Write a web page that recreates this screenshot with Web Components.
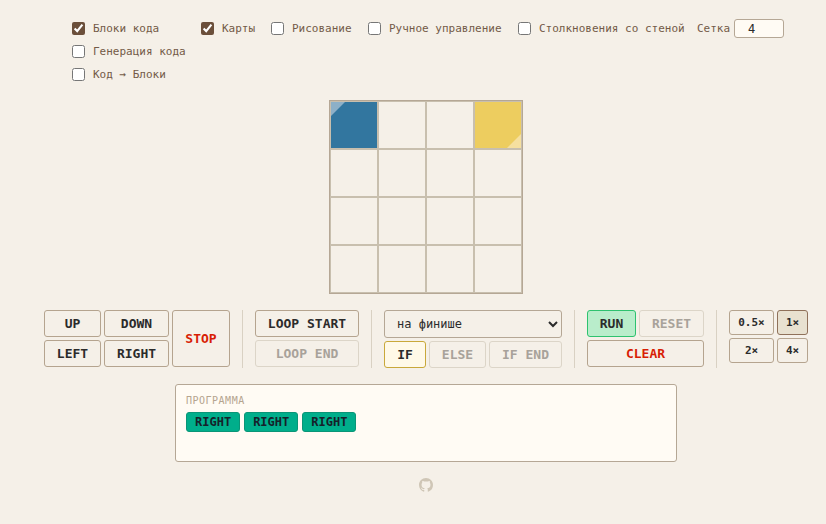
<!DOCTYPE html>
<html lang="ru">
<head>
<meta charset="utf-8">
<title>Лабиринт</title>
<style>
html, body { margin: 0; background: #f5f0e8; }
body { font-family: "DejaVu Sans Mono", monospace; color: #2b2b2b; }
</style>
</head>
<body>
<maze-app></maze-app>

<script>
const optTemplate = document.createElement('template');
optTemplate.innerHTML = `
    <label><input type="checkbox"><span><slot></slot></span></label>
    <style>
    :host { display: block; height: 13px; }
    label { align-items: center; color: #735a47; display: flex; font-size: 11px; height: 13px; white-space: nowrap; }
    input { accent-color: #6b4f3a; height: 13px; margin: 0 8px 0 0; width: 13px; }
    </style>
`;

class OptCheck extends HTMLElement {
    constructor() {
        super();
        this.attachShadow({ mode: 'open' });
        this.shadowRoot.append(optTemplate.content.cloneNode(true));
    }

    connectedCallback() {
        this.shadowRoot.querySelector('input').checked = this.hasAttribute('checked');
    }
}

const btnTemplate = document.createElement('template');
btnTemplate.innerHTML = `
    <button><slot></slot></button>
    <style>
    :host { display: block; }
    button {
        background: #f5f0e8;
        border: 1px solid #b5a48f;
        border-radius: 3px;
        box-sizing: border-box;
        color: #2b2b2b;
        display: block;
        font: bold 13px "DejaVu Sans Mono", monospace;
        height: 100%;
        padding: 0;
        width: 100%;
    }
    :host([danger]) button { color: #d81e05; }
    :host([disabled]) button { border-color: #dcd5c8; color: #a8a29a; }
    :host([kind="run"]) button { background: #b9edcb; border-color: #2ec26f; }
    :host([kind="if"]) button { background: #fff9e8; border-color: #c9a83a; }
    :host([kind="speed"]) button { font-size: 11px; }
    :host([kind="speed-on"]) button { background: #e8e1d0; border-color: #8f715a; font-size: 11px; }
    </style>
`;

class CtrlBtn extends HTMLElement {
    constructor() {
        super();
        this.attachShadow({ mode: 'open' });
        this.shadowRoot.append(btnTemplate.content.cloneNode(true));
    }
}

const gridTemplate = document.createElement('template');
gridTemplate.innerHTML = `
    <div class="board"></div>
    <style>
    :host { display: block; }
    .board {
        border: 1px solid #b5a795;
        display: grid;
        grid-template-columns: repeat(4, 48px);
        grid-auto-rows: 48px;
    }
    .cell { border: 1px solid #c8bfae; box-sizing: border-box; position: relative; }
    .start { background: #32769f; }
    .finish { background: #edcd5f; }
    .start::after, .finish::after { content: ''; height: 14px; position: absolute; width: 14px; }
    .start::after { background: #8db0c8; clip-path: polygon(0 0, 100% 0, 0 100%); left: 0; top: 0; }
    .finish::after { background: #f6e09f; bottom: 0; clip-path: polygon(100% 0, 100% 100%, 0 100%); right: 0; }
    </style>
`;

class MazeGrid extends HTMLElement {
    constructor() {
        super();
        this.attachShadow({ mode: 'open' });
        this.shadowRoot.append(gridTemplate.content.cloneNode(true));
    }

    connectedCallback() {
        const board = this.shadowRoot.querySelector('.board');
        for(let i = 0; i < 16; i++) {
            const cell = document.createElement('div');
            cell.className = 'cell' + (i === 0 ? ' start' : i === 3 ? ' finish' : '');
            board.append(cell);
        }
    }
}

const chipTemplate = document.createElement('template');
chipTemplate.innerHTML = `
    <slot></slot>
    <style>
    :host {
        background: #00ae8b;
        border: 1px solid #0a9577;
        border-radius: 3px;
        box-sizing: border-box;
        color: #16212a;
        display: block;
        font: bold 12px/18px "DejaVu Sans Mono", monospace;
        height: 20px;
        padding: 0 8px;
    }
    </style>
`;

class CmdChip extends HTMLElement {
    constructor() {
        super();
        this.attachShadow({ mode: 'open' });
        this.shadowRoot.append(chipTemplate.content.cloneNode(true));
    }
}

const panelTemplate = document.createElement('template');
panelTemplate.innerHTML = `
    <div class="title">ПРОГРАММА</div>
    <div class="list"><slot></slot></div>
    <style>
    :host {
        background: #fffbf4;
        border: 1px solid #b5a795;
        border-radius: 3px;
        box-sizing: border-box;
        display: block;
        height: 78px;
        padding: 9px 10px;
        width: 502px;
    }
    .title { color: #b5a48f; font-size: 10px; height: 18px; letter-spacing: .5px; line-height: 14px; }
    .list { display: flex; gap: 4px; }
    </style>
`;

class ProgramPanel extends HTMLElement {
    constructor() {
        super();
        this.attachShadow({ mode: 'open' });
        this.shadowRoot.append(panelTemplate.content.cloneNode(true));
    }
}

const appTemplate = document.createElement('template');
appTemplate.innerHTML = `
    <div class="options">
        <div class="stack">
            <opt-check checked>Блоки кода</opt-check>
            <opt-check>Генерация кода</opt-check>
            <opt-check>Код → Блоки</opt-check>
        </div>
        <opt-check checked class="maps">Карты</opt-check>
        <opt-check class="draw">Рисование</opt-check>
        <opt-check class="manual">Ручное управление</opt-check>
        <opt-check class="walls">Столкновения со стеной</opt-check>
        <label class="size">Сетка <input value="4"></label>
    </div>

    <maze-grid></maze-grid>

    <div class="controls">
        <div class="group moves">
            <ctrl-btn>UP</ctrl-btn>
            <ctrl-btn>DOWN</ctrl-btn>
            <ctrl-btn danger class="stop">STOP</ctrl-btn>
            <ctrl-btn>LEFT</ctrl-btn>
            <ctrl-btn>RIGHT</ctrl-btn>
        </div>
        <i></i>
        <div class="group loops">
            <ctrl-btn>LOOP START</ctrl-btn>
            <ctrl-btn disabled>LOOP END</ctrl-btn>
        </div>
        <i></i>
        <div class="group conds">
            <select><option>на финише</option></select>
            <ctrl-btn kind="if">IF</ctrl-btn>
            <ctrl-btn disabled>ELSE</ctrl-btn>
            <ctrl-btn disabled>IF END</ctrl-btn>
        </div>
        <i></i>
        <div class="group runs">
            <ctrl-btn kind="run">RUN</ctrl-btn>
            <ctrl-btn disabled>RESET</ctrl-btn>
            <ctrl-btn danger class="clear">CLEAR</ctrl-btn>
        </div>
        <i></i>
        <div class="group speeds">
            <ctrl-btn kind="speed">0.5×</ctrl-btn>
            <ctrl-btn kind="speed-on">1×</ctrl-btn>
            <ctrl-btn kind="speed">2×</ctrl-btn>
            <ctrl-btn kind="speed">4×</ctrl-btn>
        </div>
    </div>

    <program-panel>
        <cmd-chip>RIGHT</cmd-chip>
        <cmd-chip>RIGHT</cmd-chip>
        <cmd-chip>RIGHT</cmd-chip>
    </program-panel>

    <svg class="github" viewBox="0 0 16 16" width="14" height="14"><path fill="currentColor" d="M8 0C3.58 0 0 3.58 0 8c0 3.54 2.29 6.53 5.47 7.59.4.07.55-.17.55-.38 0-.19-.01-.82-.01-1.49-2.01.37-2.53-.49-2.69-.94-.09-.23-.48-.94-.82-1.13-.28-.15-.68-.52-.01-.53.63-.01 1.08.58 1.23.82.72 1.21 1.87.87 2.33.66.07-.52.28-.87.51-1.07-1.78-.2-3.64-.89-3.64-3.95 0-.87.31-1.59.82-2.15-.08-.2-.36-1.02.08-2.12 0 0 .67-.21 2.2.82.64-.18 1.32-.27 2-.27s1.36.09 2 .27c1.53-1.04 2.2-.82 2.2-.82.44 1.1.16 1.92.08 2.12.51.56.82 1.27.82 2.15 0 3.07-1.87 3.75-3.65 3.95.29.25.54.73.54 1.48 0 1.07-.01 1.93-.01 2.2 0 .21.15.46.55.38A8.01 8.01 0 0 0 16 8c0-4.42-3.58-8-8-8z"/></svg>

    <style>
    :host {
        box-sizing: border-box;
        display: flex;
        flex-direction: column;
        align-items: center;
        height: 524px;
        padding-left: 26px;
    }
    .options {
        align-self: flex-start;
        display: flex;
        margin-left: 46px;
        padding-top: 22px;
    }
    .stack { display: flex; flex-direction: column; gap: 10px; width: 129px; }
    .maps { width: 70px; }
    .draw { width: 97px; }
    .manual { width: 150px; }
    .walls { width: 179px; }
    .size {
        align-items: center;
        color: #735a47;
        display: flex;
        font-size: 11px;
        gap: 4px;
        height: 13px;
    }
    .size input {
        background: #fffbf4;
        border: 1px solid #b5a795;
        border-radius: 3px;
        box-sizing: border-box;
        color: #2b2b2b;
        font: 12px "DejaVu Sans Mono", monospace;
        height: 19px;
        padding: 0 15px 0 0;
        text-align: center;
        width: 50px;
    }
    maze-grid { margin-top: 19px; }
    .controls { display: flex; gap: 12px; margin-top: 16px; }
    .controls i { background: #d9d1c3; display: block; height: 58px; width: 1px; }
    .group { display: grid; gap: 3px; height: 57px; }
    .moves { grid-template-columns: 57px 65px 58px; grid-template-rows: 27px 27px; }
    .stop { grid-column: 3; grid-row: 1 / 3; }
    .loops { grid-template-columns: 104px; grid-template-rows: 27px 27px; }
    .conds { grid-template-columns: 42px 57px 73px; grid-template-rows: 28px 27px; }
    .conds select {
        background: transparent;
        border: 1px solid #b5a795;
        border-radius: 3px;
        color: #2b2b2b;
        font: 12px "DejaVu Sans Mono", monospace;
        grid-column: 1 / 4;
        height: 28px;
        padding-left: 8px;
    }
    .runs { grid-template-columns: 49px 65px; grid-template-rows: 27px 27px; }
    .clear { grid-column: 1 / 3; }
    .speeds { grid-template-columns: 45px 31px; grid-template-rows: 25px 25px; }
    program-panel { margin-top: 16px; }
    .github { color: #cfc6b6; margin-top: 16px; }
    </style>
`;

class MazeApp extends HTMLElement {
    constructor() {
        super();
        this.attachShadow({ mode: 'open' });
        this.shadowRoot.append(appTemplate.content.cloneNode(true));
    }
}

window.customElements.define('opt-check', OptCheck);
window.customElements.define('ctrl-btn', CtrlBtn);
window.customElements.define('maze-grid', MazeGrid);
window.customElements.define('cmd-chip', CmdChip);
window.customElements.define('program-panel', ProgramPanel);
window.customElements.define('maze-app', MazeApp);
</script>
</body>
</html>
